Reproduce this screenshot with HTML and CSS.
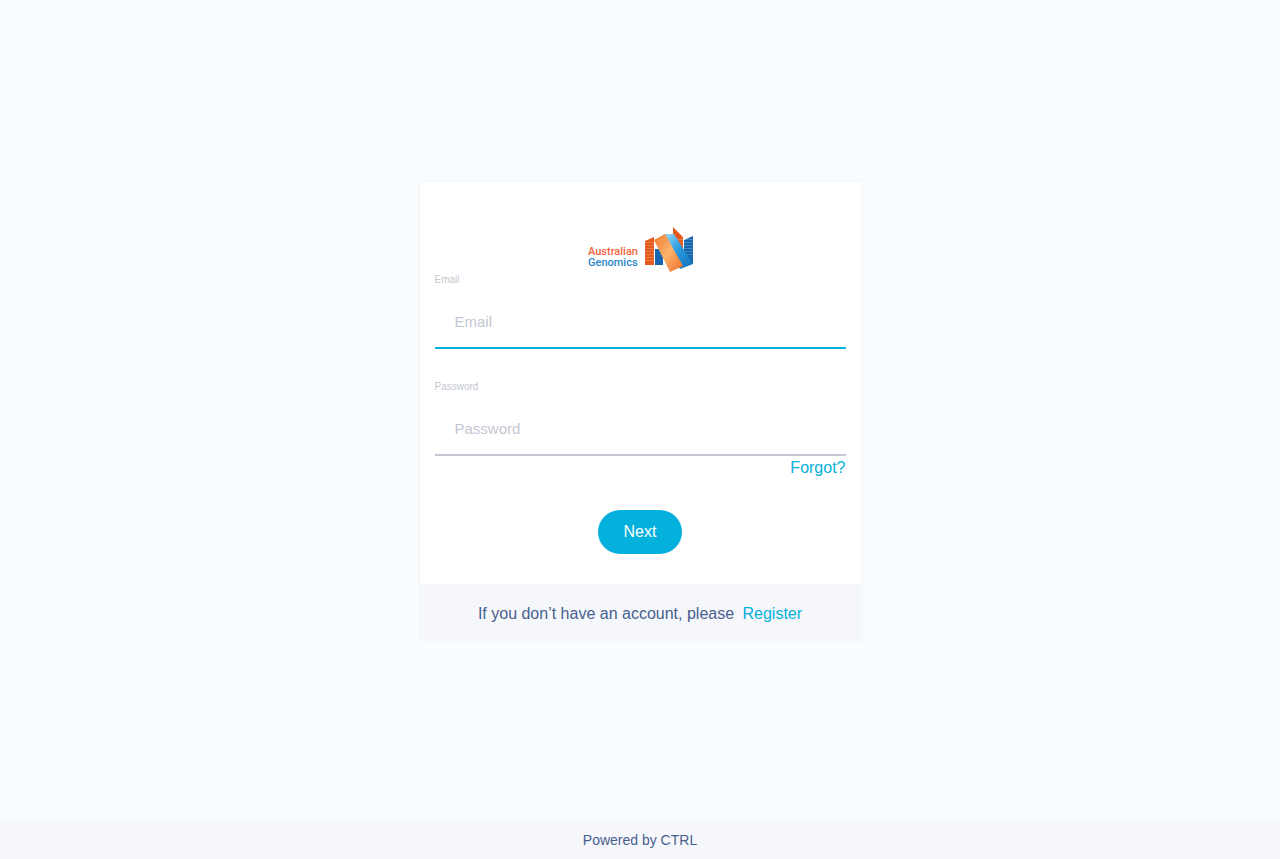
FILE: index.html
```html
<!DOCTYPE html>
<html lang="en">
<head>
<meta charset="utf-8">
<meta name="viewport" content="width=device-width, initial-scale=1">
<title>Australian Genomics</title>
<link rel="stylesheet" href="styles.css">
</head>
<body>
<main class="page">
  <section class="card">
    <form class="login">
      <svg class="logo" viewBox="0 0 106 45" role="img" aria-label="Australian Genomics">
        <defs>
          <linearGradient id="amber" x1="0" y1="0" x2="1" y2="1">
            <stop offset="0" stop-color="#f07a30"/>
            <stop offset=".5" stop-color="#fdb36c"/>
            <stop offset="1" stop-color="#ee6a25"/>
          </linearGradient>
          <linearGradient id="azure" x1="0" y1="0" x2="1" y2="1">
            <stop offset="0" stop-color="#a5dcf8"/>
            <stop offset=".45" stop-color="#2d9de0"/>
            <stop offset="1" stop-color="#0c6fba"/>
          </linearGradient>
        </defs>
        <text class="logo-top" x="1" y="28" font-size="11">Australian</text>
        <text class="logo-bottom" x="1" y="39" font-size="11">Genomics</text>
        <path fill="#e3591c" d="M58 14l9-4v28l-9 0zM86 0l10 10v25H86z"/>
        <path fill="#1767b0" d="M68 22h8v16h-8zM97 13l9-4v28h-9z"/>
        <path stroke="#fff" stroke-opacity=".2" d="M86 12.500h20M86 15.500h20M86 18.500h20M86 21.500h20M86 24.500h20M86 27.500h20M58 15.500h9M58 18.500h9M58 21.500h9M58 24.500h9M58 27.500h9M58 30.500h9M58 33.500h9"/>
        <path fill="url(#azure)" d="M76 7h11l19 30-13 5z"/>
        <path fill="url(#amber)" d="M67 13l11-6 18 32-13 6z"/>
      </svg>
      <div class="field">
        <label for="email">Email</label>
        <input class="active" id="email" type="email" placeholder="Email">
      </div>
      <div class="field">
        <label for="password">Password</label>
        <input id="password" type="password" placeholder="Password">
      </div>
      <a class="forgot" href="#">Forgot?</a>
      <button class="next" type="button">Next</button>
    </form>
    <p class="register">If you don’t have an account, please <a href="#">Register</a></p>
  </section>
</main>
<footer class="footer">Powered by CTRL</footer>
</body>
</html>
```
FILE: styles.css
```css
* { box-sizing: border-box; }
body {
  margin: 0;
  min-height: 100vh;
  display: flex;
  flex-direction: column;
  background: #f8fcff;
  color: #475f8f;
  font: 16px/24px "Liberation Sans", Arial, sans-serif;
}
a { color: #04b0dc; text-decoration: none; }
.page {
  flex: 1;
  display: flex;
  align-items: center;
  justify-content: center;
}
.card {
  width: 100%;
  max-width: 445px;
  border: 2px solid #f6f8fc;
  background: #fff;
}
.login {
  display: flex;
  flex-direction: column;
  padding: 45px 15px 30px;
}
.logo {
  align-self: center;
  width: 106px;
  height: 45px;
}
.logo text { font-family: Roboto, sans-serif; font-weight: 500; }
.logo-top { fill: #f0643c; }
.logo-bottom { fill: #2c86c6; }
.field { display: flex; flex-direction: column; gap: 10px; }
.field + .field { margin-top: 30px; }
.field label { color: #c4c8d4; font-size: 10px; line-height: 15px; }
.field input {
  width: 100%;
  height: 52px;
  padding: 0 20px 2px;
  border: 0;
  border-bottom: 2px solid #c4c8d4;
  border-radius: 0;
  outline: 0;
  background: transparent;
  color: #475f8f;
  font: inherit;
  font-size: 15px;
}
.field input::placeholder { color: #c4c8d4; opacity: 1; }
.field .active { border-color: #04b0dc; }
.forgot { align-self: flex-end; }
.next {
  align-self: center;
  height: 44px;
  margin-top: 30px;
  padding: 0 26px;
  border: 0;
  border-radius: 22px;
  background: #04b0dc;
  color: #fff;
  font: inherit;
}
.register {
  margin: 0;
  padding: 18px 15px 14px;
  background: #f6f7fb;
  text-align: center;
}
.register a { margin-left: 4px; }
.footer {
  padding: 8px 15px;
  background: #f6f7fb;
  font-size: 14px;
  line-height: 21px;
  text-align: center;
}
```
